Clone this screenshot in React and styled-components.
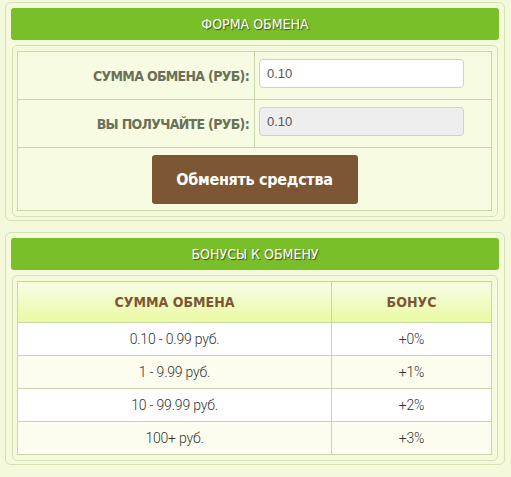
import React from 'react'
import styled, { createGlobalStyle } from 'styled-components'

const GlobalStyle = createGlobalStyle`
  body {
    margin: 0;
    background: #f4f9dc;
    font-family: "DejaVu Sans Condensed", "DejaVu Sans", sans-serif;
  }
`

const Page = styled.div`
  padding: 2px 6px 0 5px;
  display: flex;
  flex-direction: column;
  gap: 11px;
`

const Panel = styled.div`
  border: 1px solid #d5e0b6;
  border-radius: 6px;
  background: #f5fadd;
  padding: 5px 5px 3px 5px;
`

const Header = styled.div`
  height: 32px;
  background: #79bf29;
  border-radius: 3px;
  color: #fff;
  font-size: 14px;
  text-transform: uppercase;
  display: flex;
  align-items: center;
  justify-content: center;
  text-shadow: 1px 1px 1px rgba(40, 60, 10, 0.8);
`

const Inner = styled.div`
  margin: 5px 1px 0 1px;
  border: 1px solid #d5e0b6;
  border-radius: 5px;
  padding: 5px 5px 5px 4px;
`

const Table = styled.table`
  width: 100%;
  border-collapse: collapse;
  border: 1px solid #c9d6aa;
  table-layout: fixed;
`

const Label = styled.td`
  width: 231px;
  height: 47px;
  padding: 0 5px 0 0;
  text-align: right;
  font-weight: bold;
  font-size: 14px;
  letter-spacing: -0.7px;
  color: #6a7157;
  border: 1px solid #c9d6aa;
  background: #f7fbe1;
`

const Field = styled.td`
  padding: 0 4px;
  border: 1px solid #c9d6aa;
  background: #f7fbe1;
`

const Input = styled.input`
  box-sizing: border-box;
  width: 205px;
  height: 29px;
  margin-bottom: 5px;
  border: 1px solid #cfcfcf;
  border-radius: 4px;
  background: ${p => (p.readOnly ? '#eeeeee' : '#fff')};
  padding: 0 7px;
  font-family: "Liberation Sans", Arial, sans-serif;
  font-size: 13px;
  color: #555;
  display: block;
`

const ButtonCell = styled.td`
  height: 62px;
  padding: 0;
  text-align: center;
  border: 1px solid #c9d6aa;
  background: #f7fbe1;
`

const Button = styled.button`
  width: 206px;
  height: 49px;
  border: none;
  border-radius: 3px;
  background: #7d5734;
  color: #fff;
  font-family: "DejaVu Sans Condensed", "DejaVu Sans", sans-serif;
  font-weight: bold;
  font-size: 16px;
  letter-spacing: -0.3px;
  cursor: pointer;
`

const Th = styled.th`
  height: 40px;
  padding: 0;
  width: ${p => p.$w || 'auto'};
  border: 1px solid #c9d6aa;
  background: linear-gradient(to bottom, #f8fde8 0%, #e9f9a0 100%);
  color: #7d5734;
  font-size: 14px;
  font-weight: bold;
  text-transform: uppercase;
`

const Row = styled.tr`
  background: ${p => (p.$odd ? '#fdfdef' : '#ffffff')};
`

const Td = styled.td`
  height: 32px;
  padding: 0;
  border: 1px solid #c9d6aa;
  text-align: center;
  font-family: Roboto, "Liberation Sans", sans-serif;
  font-weight: 300;
  font-size: 14px;
  letter-spacing: -0.2px;
  color: #333;
`

const bonuses = [
  ['0.10 - 0.99 руб.', '+0%'],
  ['1 - 9.99 руб.', '+1%'],
  ['10 - 99.99 руб.', '+2%'],
  ['100+ руб.', '+3%'],
]

export default function App() {
  return (
    <>
      <GlobalStyle />
      <Page>
        <Panel>
          <Header>Форма обмена</Header>
          <Inner>
            <Table>
              <tbody>
                <tr>
                  <Label>СУММА ОБМЕНА (РУБ):</Label>
                  <Field>
                    <Input defaultValue="0.10" />
                  </Field>
                </tr>
                <tr>
                  <Label>ВЫ ПОЛУЧАЙТЕ (РУБ):</Label>
                  <Field>
                    <Input defaultValue="0.10" readOnly />
                  </Field>
                </tr>
                <tr>
                  <ButtonCell colSpan={2}>
                    <Button>Обменять средства</Button>
                  </ButtonCell>
                </tr>
              </tbody>
            </Table>
          </Inner>
        </Panel>

        <Panel>
          <Header>Бонусы к обмену</Header>
          <Inner>
            <Table>
              <thead>
                <tr>
                  <Th $w="313px">Сумма обмена</Th>
                  <Th>Бонус</Th>
                </tr>
              </thead>
              <tbody>
                {bonuses.map(([sum, bonus], i) => (
                  <Row key={sum} $odd={i % 2 === 1}>
                    <Td>{sum}</Td>
                    <Td>{bonus}</Td>
                  </Row>
                ))}
              </tbody>
            </Table>
          </Inner>
        </Panel>
      </Page>
    </>
  )
}
